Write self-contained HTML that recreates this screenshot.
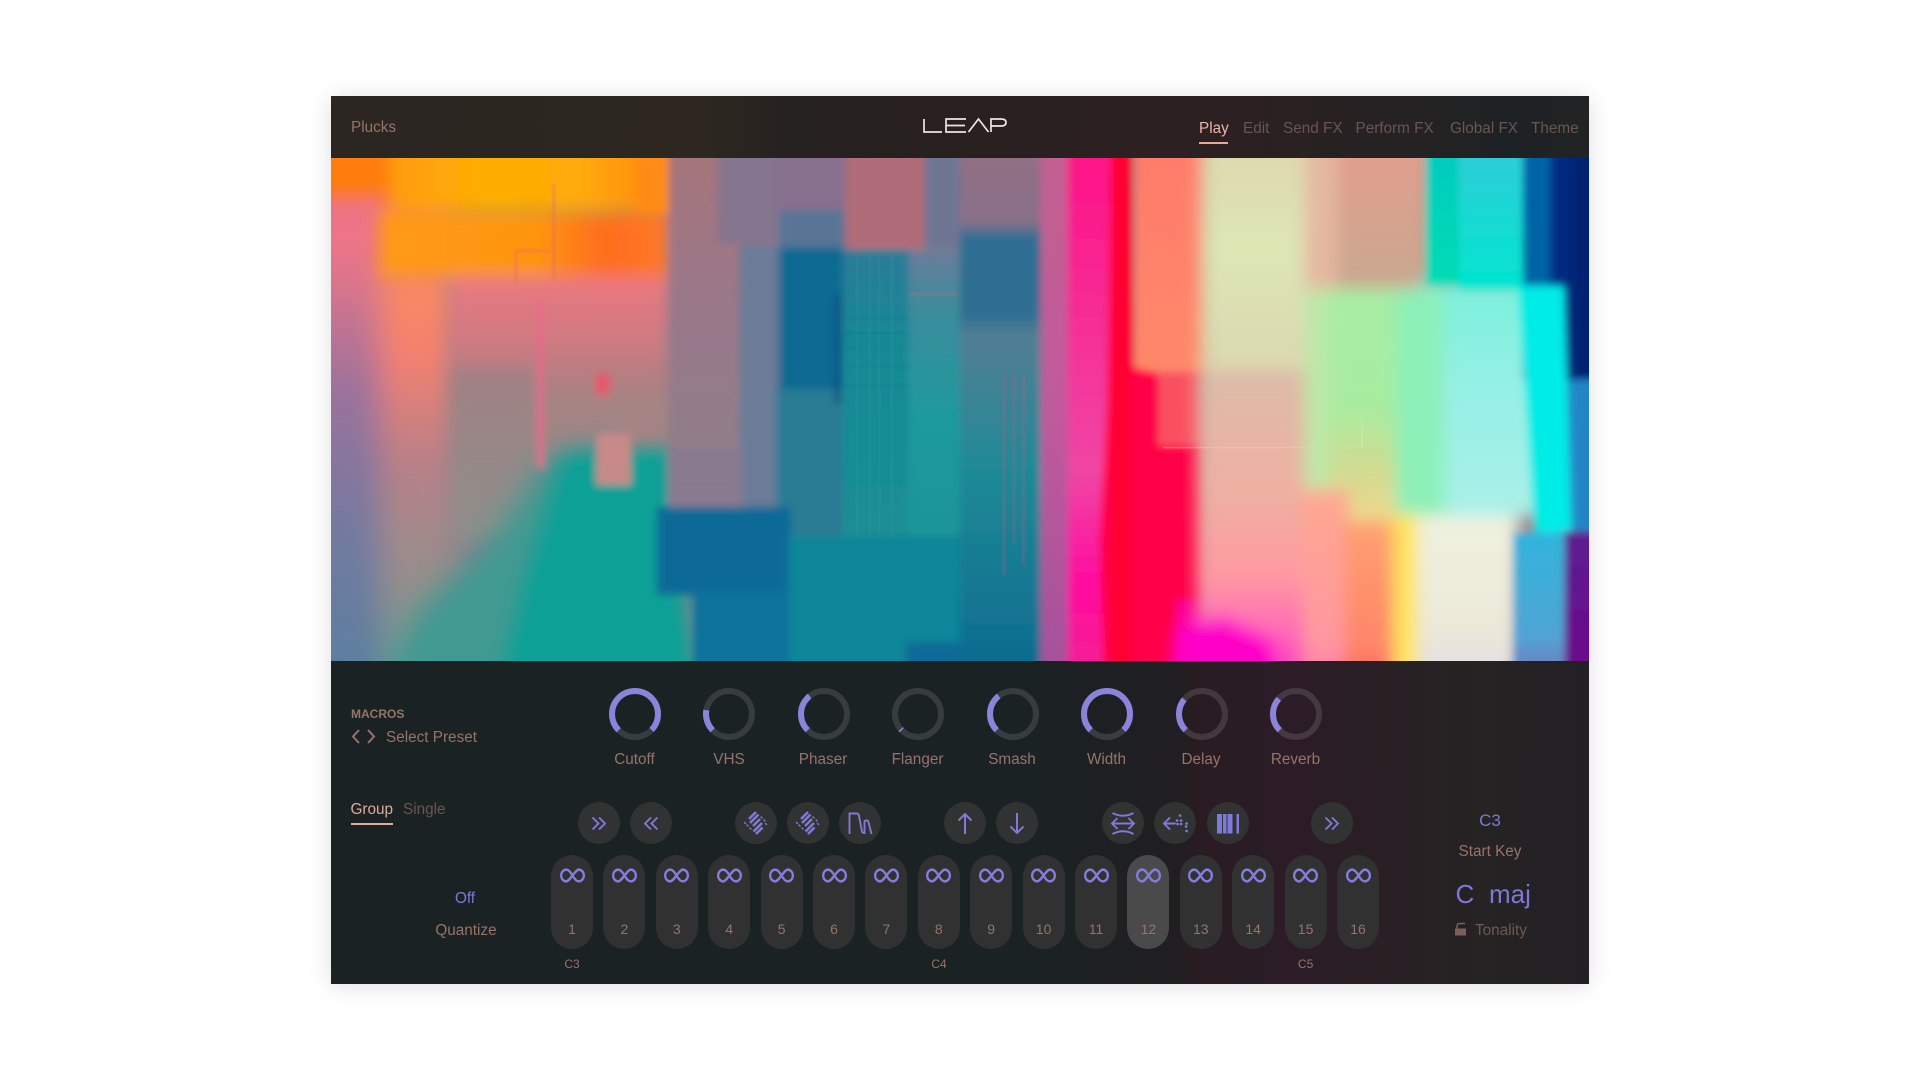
<!DOCTYPE html>
<html><head><meta charset="utf-8"><title>LEAP</title>
<style>
html,body{margin:0;padding:0;background:#fff;width:1920px;height:1080px;overflow:hidden}
body{font-family:"Liberation Sans",sans-serif;position:relative}
#p{position:absolute;left:331px;top:96px;width:1258px;height:888px;box-shadow:0 2px 22px rgba(0,0,0,.13);overflow:hidden;background:#1b2224}
#h{position:absolute;left:0;top:0;width:1258px;height:62px;background:linear-gradient(90deg,#2b2622 0,#2d2720 30%,#252120 37%,#2c2021 62%,#2d2022 70%,#232223 88%,#1d2224 94%,#222325 100%)}
#b{position:absolute;left:0;top:565px;width:1258px;height:323px;background:linear-gradient(90deg,#1b2224 0,#1b2224 56%,#1d2023 61%,#201e21 67.5%,#291c21 68.5%,#2b1c27 76%,#2a1e25 82%,#282123 86%,#252323 92%,#241f25 100%)}
#art{position:absolute;left:0;top:62px;width:1258px;height:503px;display:block}
.t{position:absolute;white-space:nowrap;line-height:20px;font-size:15.3px;margin-top:1.5px;color:#967469;transform:translateY(-50%)}
.c{transform:translate(-50%,-50%)}
.dim{color:#6a5550}
.pu{color:#7d78d6}
.r{position:absolute;width:42px;height:42px;border-radius:50%;background:#313232;top:802px;margin-left:-21px}
.r svg{position:absolute;left:0;top:0;width:42px;height:42px;fill:none;stroke:#7f79d8;stroke-width:1.9}
.k{position:absolute;width:42px;height:94px;top:855px;border-radius:21px;background:#313131;margin-left:-21px}
.k svg{position:absolute;left:8.5px;top:12.5px;width:25px;height:15px;fill:none;stroke:#837dde;stroke-width:2.4}
.k span{position:absolute;left:0;right:0;top:65px;text-align:center;font-size:14px;line-height:18px;color:#967469}
.k.on{background:#4a4a4a}
.kn{position:absolute;top:687.5px;width:52px;height:52px;margin-left:-25.5px}
.kn svg{display:block;width:52px;height:52px;fill:none;stroke-width:6}
.kn .a{stroke:rgba(255,255,255,.125)}
.kn .v{stroke:#8a84da}
</style></head><body>
<svg width="0" height="0" style="position:absolute"><defs>
<symbol id="inf" viewBox="0 0 26 14" preserveAspectRatio="none"><path d="M13 7C10.5 3 8.5 1.5 6.5 1.5C3.5 1.5 1.2 4 1.2 7C1.2 10 3.5 12.5 6.5 12.5C10 12.5 16 1.5 19.5 1.5C22.5 1.5 24.8 4 24.8 7C24.8 10 22.5 12.5 19.5 12.5C17.5 12.5 15.5 11 13 7Z"/></symbol>
<symbol id="dia" viewBox="0 0 42 42"><path style="stroke-width:2.6" d="M9.5 21.5L10.5 20.5M14 17L21 10M12 24L13 23M15 21L23.5 12.5M15 27L16 26M18 24L25 17M26 16L27 15M18.5 29.5L27 21M29 19L30 18M21 32L27.5 25.5M30.5 22.5L31.5 21.5"/></symbol>
</defs></svg>
<div id="p">
<div id="h"></div>
<svg id="art" viewBox="270 129 1028 411" preserveAspectRatio="none" xmlns="http://www.w3.org/2000/svg">
<defs>
<filter id="g" filterUnits="userSpaceOnUse" x="220" y="90" width="1130" height="490"><feGaussianBlur stdDeviation="3.2"/></filter>
<filter id="f1" x="-20%" y="-20%" width="140%" height="140%"><feGaussianBlur stdDeviation="1"/></filter>
<filter id="f3" filterUnits="userSpaceOnUse" x="220" y="90" width="1130" height="490"><feGaussianBlur stdDeviation="6"/></filter>
<filter id="f8" filterUnits="userSpaceOnUse" x="220" y="90" width="1130" height="490"><feGaussianBlur stdDeviation="12"/></filter>
<linearGradient id="lc" x1="0" y1="0" x2="0" y2="1"><stop offset="0" stop-color="#f4707c"/><stop offset=".2" stop-color="#ec7488"/><stop offset=".45" stop-color="#9a729c"/><stop offset=".7" stop-color="#727aa0"/><stop offset="1" stop-color="#5580a0"/></linearGradient>
<linearGradient id="lc2" x1="0" y1="0" x2="0" y2="1"><stop offset="0" stop-color="#fb8c5e"/><stop offset=".2" stop-color="#f48070"/><stop offset=".45" stop-color="#b88088"/><stop offset=".75" stop-color="#92908c"/><stop offset="1" stop-color="#5b9a96"/></linearGradient>
<linearGradient id="top" x1="0" y1="0" x2="1" y2="0"><stop offset="0" stop-color="#ff9c0c"/><stop offset=".35" stop-color="#ffae04"/><stop offset=".7" stop-color="#ffa908"/><stop offset="1" stop-color="#ff8414"/></linearGradient>
<linearGradient id="or" x1="0" y1="0" x2="1" y2="0"><stop offset="0" stop-color="#ff9a14"/><stop offset=".55" stop-color="#ff9410"/><stop offset=".78" stop-color="#ff6c1e"/><stop offset="1" stop-color="#ff7a28"/></linearGradient>
<linearGradient id="pk" x1="0" y1="0" x2="0" y2="1"><stop offset="0" stop-color="#ee7880"/><stop offset=".5" stop-color="#d07a82"/><stop offset="1" stop-color="#a08280"/></linearGradient>
<linearGradient id="mv" x1="0" y1="0" x2="0" y2="1"><stop offset="0" stop-color="#a87478"/><stop offset=".5" stop-color="#98788a"/><stop offset="1" stop-color="#8c8088"/></linearGradient>
<linearGradient id="gr" x1="0" y1="0" x2="0" y2="1"><stop offset="0" stop-color="#a08084"/><stop offset="1" stop-color="#90908a"/></linearGradient>
<linearGradient id="stb" x1="0" y1="0" x2="0" y2="1"><stop offset="0" stop-color="#2c7a98"/><stop offset=".35" stop-color="#158a94"/><stop offset="1" stop-color="#1b8e94"/></linearGradient>
<linearGradient id="st2" x1="0" y1="0" x2="0" y2="1"><stop offset="0" stop-color="#6a7c9a"/><stop offset=".2" stop-color="#3c8c9c"/><stop offset=".55" stop-color="#1f9a9c"/><stop offset="1" stop-color="#1a9498"/></linearGradient>
<linearGradient id="c1" x1="0" y1="0" x2="0" y2="1"><stop offset="0" stop-color="#927082"/><stop offset=".17" stop-color="#8a7088"/><stop offset=".2" stop-color="#2e6e92"/><stop offset=".33" stop-color="#2e6e92"/><stop offset=".37" stop-color="#527e94"/><stop offset=".6" stop-color="#1f8a96"/><stop offset=".93" stop-color="#0e6c90"/><stop offset="1" stop-color="#0a5a90"/></linearGradient>
<linearGradient id="c2" x1="0" y1="0" x2="0" y2="1"><stop offset="0" stop-color="#c46090"/><stop offset=".5" stop-color="#c05a9c"/><stop offset="1" stop-color="#a0509c"/></linearGradient>
<linearGradient id="mg" x1="0" y1="0" x2="0" y2="1"><stop offset="0" stop-color="#ff0c84"/><stop offset=".6" stop-color="#f046a4"/><stop offset=".8" stop-color="#ff0aa0"/><stop offset="1" stop-color="#f02a90"/></linearGradient>
<linearGradient id="cr" x1="0" y1="0" x2="0" y2="1"><stop offset="0" stop-color="#dfd6ac"/><stop offset=".5" stop-color="#dde6b4"/><stop offset="1" stop-color="#dcd8b0"/></linearGradient>
<linearGradient id="low" x1="0" y1="0" x2="0" y2="1"><stop offset="0" stop-color="#dcbca8"/><stop offset=".4" stop-color="#eeb0a2"/><stop offset=".68" stop-color="#ff9aa0"/><stop offset=".85" stop-color="#ff70b4"/><stop offset="1" stop-color="#ff40c0"/></linearGradient>
<linearGradient id="lw2" x1="0" y1="0" x2="0" y2="1"><stop offset="0" stop-color="#ffa890"/><stop offset=".7" stop-color="#ff98a0"/><stop offset="1" stop-color="#ff78b0"/></linearGradient>
<linearGradient id="rs" x1="0" y1="0" x2="0" y2="1"><stop offset="0" stop-color="#e89c8c"/><stop offset="1" stop-color="#c8a890"/></linearGradient>
<linearGradient id="gn" x1="0" y1="0" x2="0" y2="1"><stop offset="0" stop-color="#a6eea4"/><stop offset=".5" stop-color="#a8eca0"/><stop offset=".8" stop-color="#d4da90"/><stop offset="1" stop-color="#f0d88c"/></linearGradient>
<linearGradient id="cy" x1="0" y1="0" x2="0" y2="1"><stop offset="0" stop-color="#7cf0dc"/><stop offset=".5" stop-color="#98f0e6"/><stop offset="1" stop-color="#aaf0e8"/></linearGradient>
<linearGradient id="cy2" x1="0" y1="0" x2="0" y2="1"><stop offset="0" stop-color="#38c8d8"/><stop offset="1" stop-color="#00e6d0"/></linearGradient>
<linearGradient id="cy0" x1="0" y1="0" x2="0" y2="1"><stop offset="0" stop-color="#00c8c0"/><stop offset="1" stop-color="#00dcb4"/></linearGradient>
<linearGradient id="wh" x1="0" y1="0" x2="0" y2="1"><stop offset="0" stop-color="#f0f2e0"/><stop offset=".6" stop-color="#ece8d8"/><stop offset="1" stop-color="#dcd8ec"/></linearGradient>
<linearGradient id="rb" x1="0" y1="0" x2="0" y2="1"><stop offset="0" stop-color="#30b4dc"/><stop offset=".6" stop-color="#50a4d4"/><stop offset="1" stop-color="#8c5cb0"/></linearGradient>
<linearGradient id="pp" x1="0" y1="0" x2="0" y2="1"><stop offset="0" stop-color="#5c2090"/><stop offset="1" stop-color="#70008a"/></linearGradient>
<linearGradient id="nv" x1="0" y1="0" x2="1" y2="0"><stop offset="0" stop-color="#00308a"/><stop offset="1" stop-color="#000c48"/></linearGradient>
<linearGradient id="ob" x1="0" y1="0" x2="0" y2="1"><stop offset="0" stop-color="#ffa070"/><stop offset=".7" stop-color="#ff8468"/><stop offset="1" stop-color="#f04060"/></linearGradient>
<linearGradient id="sal" x1="0" y1="0" x2="0" y2="1"><stop offset="0" stop-color="#ff7a6c"/><stop offset="1" stop-color="#ff8868"/></linearGradient>
</defs>
<rect x="220" y="90" width="1130" height="490" fill="#90808c"/>
<g filter="url(#g)">
<g filter="url(#f8)">
<rect x="230" y="110" width="140" height="470" fill="url(#lc)"/>
<rect x="310" y="222" width="62" height="350" fill="url(#lc2)"/>
</g>
<g filter="url(#f3)">
<rect x="368" y="222" width="178" height="110" fill="url(#pk)"/>
<rect x="368" y="300" width="70" height="140" fill="url(#gr)"/>
<rect x="436" y="320" width="112" height="60" fill="#a68484"/>
<rect x="309" y="172" width="238" height="54" fill="url(#or)"/>
</g>
<g filter="url(#f3)">
<rect x="230" y="100" width="90" height="60" fill="#ff7c10"/>
<rect x="318" y="100" width="228" height="74" fill="url(#top)"/>
</g>
<rect x="520" y="100" width="26" height="74" fill="#ff8c12"/>
<polygon points="300,590 340,500 400,440 450,368 500,360 500,590" fill="#3f9a92" filter="url(#f8)"/>
<polygon points="400,590 430,470 460,372 546,364 572,590" fill="#0ca096" filter="url(#f3)"/>
<rect x="546" y="100" width="90" height="319" fill="url(#mv)"/>
<rect x="586" y="100" width="50" height="99" fill="#86748e"/>
<rect x="636" y="100" width="56" height="75" fill="#86708e"/>
<rect x="636" y="172" width="56" height="32" fill="#587496"/>
<rect x="690" y="100" width="66" height="103" fill="#b06c78"/>
<rect x="755" y="100" width="30" height="104" fill="#6e7694"/>
<rect x="604" y="200" width="32" height="216" fill="#6a7c98"/>
<rect x="546" y="366" width="60" height="50" fill="#8a7a90"/>
<rect x="686" y="204" width="58" height="236" fill="url(#stb)"/>
<rect x="742" y="205" width="44" height="240" fill="url(#st2)"/>
<rect x="634" y="316" width="54" height="130" fill="#2a7c94"/>
<rect x="536" y="414" width="110" height="72" fill="#106a98"/>
<rect x="566" y="484" width="80" height="90" fill="#10729c"/>
<rect x="644" y="438" width="142" height="136" fill="#0e8699"/>
<rect x="740" y="525" width="46" height="50" fill="#0c6a98"/>
<rect x="636" y="202" width="52" height="116" fill="#0a6a92"/>
<rect x="682" y="240" width="4" height="90" fill="#0c4c84"/>
<path d="M441 244V382" stroke="#e8688a" stroke-width="4.5"/>
<rect x="486" y="305" width="12" height="18" fill="#e4586c"/>
<rect x="487" y="354" width="28" height="42" fill="#c88a88"/>
<rect x="784" y="100" width="70" height="474" fill="url(#c1)"/>
<rect x="850" y="100" width="28" height="474" fill="url(#c2)"/>
<rect x="872" y="100" width="36" height="474" fill="url(#mg)"/>
<rect x="927" y="100" width="60" height="206" fill="url(#sal)"/>
<polygon points="908,100 924,100 926,300 945,304 950,340 982,345 982,575 902,575 898,440 904,330" fill="#ff0048"/>
<rect x="946" y="304" width="36" height="60" fill="#fa5060"/>
<rect x="960" y="490" width="22" height="85" fill="#ff0090"/>
<rect x="908" y="100" width="16" height="474" fill="#ff0030"/>
<g filter="url(#f3)">
<rect x="981" y="100" width="102" height="205" fill="url(#cr)"/>
<rect x="978" y="302" width="106" height="245" fill="url(#low)"/>
<rect x="1066" y="100" width="30" height="136" fill="#e4b8a0"/>
<rect x="1092" y="100" width="76" height="136" fill="url(#rs)"/>
<rect x="1066" y="236" width="60" height="185" fill="#bce8a8"/>
<rect x="1086" y="236" width="82" height="190" fill="url(#gn)"/>
<rect x="1064" y="400" width="38" height="170" fill="url(#lw2)"/>
<rect x="1098" y="426" width="46" height="150" fill="url(#ob)"/>
<rect x="1160" y="230" width="100" height="192" fill="url(#cy)"/>
<rect x="1140" y="236" width="40" height="185" fill="#8cf0b8"/>
<polygon points="950,590 962,510 1000,503 1040,522 1052,590" fill="#ff00c8"/>
<rect x="1155" y="421" width="85" height="154" fill="url(#wh)"/>
<rect x="1138" y="420" width="20" height="154" fill="#ffe45c"/>
</g>
<rect x="1164" y="100" width="30" height="133" fill="url(#cy0)"/>
<rect x="1192" y="100" width="56" height="137" fill="url(#cy2)"/>
<rect x="1244" y="100" width="24" height="210" fill="#0064a6"/>
<rect x="1266" y="100" width="70" height="213" fill="url(#nv)"/>
<rect x="1275" y="310" width="60" height="126" fill="#2286c6"/>
<polygon points="1240,233 1278,233 1284,438 1254,438" fill="#00ece6" filter="url(#f1)"/>
<rect x="1276" y="434" width="60" height="140" fill="url(#pp)"/>
<rect x="1236" y="435" width="42" height="140" fill="url(#rb)"/>
</g>
<g filter="url(#f1)">
<g stroke="#2aa8a4" stroke-width="1.4" opacity=".3"><path d="M700 205V440M710 205V440M718 205V440M728 205V440"/></g>
<g stroke="#0c6f8c" stroke-width="1" opacity=".3"><path d="M690 260H742M690 272H742M690 285H742M690 300H742M690 315H742"/></g>
<g stroke="#9a7a8e" stroke-width="2" opacity=".5"><path d="M548 398H598M548 408H598M742 240H782"/></g>
<path d="M421 205H449M421 205V232M452 150V230" stroke="#e87060" stroke-width="2" fill="none" opacity=".55"/>
<g stroke="#b85a88" stroke-width="1.6" opacity=".5" fill="none"><path d="M820 305V470M828 305V445M836 305V462"/></g>
</g>
<rect x="950" y="365" width="163" height="1.2" fill="#f0d0c0" opacity=".4"/>
<rect x="1112" y="342" width="1" height="24" fill="#f0e8c8" opacity=".35"/>
</svg>
<div id="b"></div>
</div>

<div class="t" style="left:351px;top:126px">Plucks</div>
<svg style="position:absolute;left:922px;top:117px" width="88" height="18" fill="none" stroke="#ece6e2" stroke-width="1.7">
<path d="M2 2V15H20M44 2H24V15H44M24 8.5H43M46.5 15L56.5 2L66.5 15M69 15V2H79Q84 2 84 5.5Q84 9 79 9H69"/>
</svg>
<div class="t" style="left:1199px;top:127px;color:#e6b6a6">Play</div>
<div style="position:absolute;left:1199px;top:142px;width:29px;height:1.6px;background:#e6a898"></div>
<div class="t dim" style="left:1243px;top:127px">Edit</div>
<div class="t dim" style="left:1283px;top:127px">Send FX</div>
<div class="t dim" style="left:1355.5px;top:127px">Perform FX</div>
<div class="t dim" style="left:1450px;top:127px">Global FX</div>
<div class="t dim" style="left:1531px;top:127px">Theme</div>

<div class="t" style="left:351px;top:712px;font-size:12px;font-weight:bold">MACROS</div>
<svg style="position:absolute;left:351px;top:728px" width="25" height="17" fill="none" stroke="#967469" stroke-width="2"><path d="M8 2L2 8.5L8 15M17 2L23 8.5L17 15"/></svg>
<div class="t" style="left:386px;top:736px">Select Preset</div>

<div class="kn" style="left:634px"><svg><circle class="a" cx="26" cy="26" r="23"/><circle class="v" cx="26" cy="26" r="23" pathLength="360" stroke-dasharray="270 360" transform="rotate(135 26 26)"/></svg></div>
<div class="kn" style="left:728.6px"><svg><circle class="a" cx="26" cy="26" r="23"/><circle class="v" cx="26" cy="26" r="23" pathLength="360" stroke-dasharray="55 360" transform="rotate(135 26 26)"/></svg></div>
<div class="kn" style="left:823px"><svg><circle class="a" cx="26" cy="26" r="23"/><circle class="v" cx="26" cy="26" r="23" pathLength="360" stroke-dasharray="97 360" transform="rotate(135 26 26)"/></svg></div>
<div class="kn" style="left:917.5px"><svg><circle class="a" cx="26" cy="26" r="23"/><circle class="v" cx="26" cy="26" r="23" pathLength="360" stroke-dasharray="4 360" transform="rotate(135 26 26)"/></svg></div>
<div class="kn" style="left:1012px"><svg><circle class="a" cx="26" cy="26" r="23"/><circle class="v" cx="26" cy="26" r="23" pathLength="360" stroke-dasharray="97 360" transform="rotate(135 26 26)"/></svg></div>
<div class="kn" style="left:1106px"><svg><circle class="a" cx="26" cy="26" r="23"/><circle class="v" cx="26" cy="26" r="23" pathLength="360" stroke-dasharray="270 360" transform="rotate(135 26 26)"/></svg></div>
<div class="kn" style="left:1201px"><svg><circle class="a" cx="26" cy="26" r="23"/><circle class="v" cx="26" cy="26" r="23" pathLength="360" stroke-dasharray="85 360" transform="rotate(135 26 26)"/></svg></div>
<div class="kn" style="left:1295.5px"><svg><circle class="a" cx="26" cy="26" r="23"/><circle class="v" cx="26" cy="26" r="23" pathLength="360" stroke-dasharray="87 360" transform="rotate(135 26 26)"/></svg></div>

<div class="t c" style="left:634.5px;top:758px">Cutoff</div>
<div class="t c" style="left:729px;top:758px">VHS</div>
<div class="t c" style="left:823px;top:758px">Phaser</div>
<div class="t c" style="left:917.5px;top:758px">Flanger</div>
<div class="t c" style="left:1012px;top:758px">Smash</div>
<div class="t c" style="left:1106.5px;top:758px">Width</div>
<div class="t c" style="left:1201px;top:758px">Delay</div>
<div class="t c" style="left:1295.5px;top:758px">Reverb</div>

<div class="t" style="left:350.5px;top:808px;color:#dfa998">Group</div>
<div style="position:absolute;left:350.5px;top:823px;width:42.5px;height:1.7px;background:#e6a898"></div>
<div class="t dim" style="left:403px;top:808px">Single</div>
<div class="t c pu" style="left:465px;top:897px">Off</div>
<div class="t c" style="left:466px;top:929px">Quantize</div>

<div class="r" style="left:598.5px"><svg><path d="M14.5 15.5L20.5 21.5L14.5 27.5M21 15.5L27 21.5L21 27.5"/></svg></div>
<div class="r" style="left:650.5px"><svg><path d="M21 15.5L15 21.5L21 27.5M27.5 15.5L21.5 21.5L27.5 27.5"/></svg></div>
<div class="r" style="left:755.5px"><svg><use href="#dia"/></svg></div>
<div class="r" style="left:807.5px"><svg><use href="#dia"/></svg></div>
<div class="r" style="left:860px"><svg><path d="M10.5 32V11.5H18Q19.5 11.5 20 14L23 29.5Q23.5 31 25 31H25.5V20Q25.5 18.5 27 18.5H28Q29 18.5 29.4 20L32.5 32"/></svg></div>
<div class="r" style="left:964.5px"><svg style="stroke-width:2"><path d="M21 32V12M14.5 18.5L21 12L27.5 18.5"/></svg></div>
<div class="r" style="left:1017px"><svg style="stroke-width:2"><path d="M21 11V31M14.5 24.5L21 31L27.5 24.5"/></svg></div>
<div class="r" style="left:1122.5px"><svg><path d="M10 21.5H32M15.5 16L10 21.5L15.5 27M26.5 16L32 21.5L26.5 27M10.5 11Q21 16.5 31.5 11M10.5 32Q21 26.5 31.5 32"/></svg></div>
<div class="r" style="left:1175px"><svg style="stroke-linecap:round"><path d="M10 21.5H21M15.5 16L10 21.5L15.5 27"/><path style="stroke-width:2.6" d="M26 13.5H26.2M23 18.5H23.2M27 18.5H27.2M23.5 22H23.7M27 22H27.2M32.5 21.5H32.7M32.5 29H32.7M32 24.5H32.2"/></svg></div>
<div class="r" style="left:1227.5px"><svg style="stroke:none;fill:#807ada"><path d="M10 12H15V31.5H10ZM16 12H19.5V31.5H16ZM20.5 12H25.5V31.5H20.5ZM29.5 12H32V31.5H29.5Z"/></svg></div>
<div class="r" style="left:1331.5px"><svg><path d="M14.5 15.5L20.5 21.5L14.5 27.5M21 15.5L27 21.5L21 27.5"/></svg></div>

<div class="k" style="left:572px"><svg><use href="#inf"/></svg><span>1</span></div>
<div class="k" style="left:624.4px"><svg><use href="#inf"/></svg><span>2</span></div>
<div class="k" style="left:676.8px"><svg><use href="#inf"/></svg><span>3</span></div>
<div class="k" style="left:729.2px"><svg><use href="#inf"/></svg><span>4</span></div>
<div class="k" style="left:781.6px"><svg><use href="#inf"/></svg><span>5</span></div>
<div class="k" style="left:834px"><svg><use href="#inf"/></svg><span>6</span></div>
<div class="k" style="left:886.4px"><svg><use href="#inf"/></svg><span>7</span></div>
<div class="k" style="left:938.8px"><svg><use href="#inf"/></svg><span>8</span></div>
<div class="k" style="left:991.2px"><svg><use href="#inf"/></svg><span>9</span></div>
<div class="k" style="left:1043.6px"><svg><use href="#inf"/></svg><span>10</span></div>
<div class="k" style="left:1096px"><svg><use href="#inf"/></svg><span>11</span></div>
<div class="k on" style="left:1148.4px"><svg><use href="#inf"/></svg><span>12</span></div>
<div class="k" style="left:1200.8px"><svg><use href="#inf"/></svg><span>13</span></div>
<div class="k" style="left:1253.2px"><svg><use href="#inf"/></svg><span>14</span></div>
<div class="k" style="left:1305.6px"><svg><use href="#inf"/></svg><span>15</span></div>
<div class="k" style="left:1358px"><svg><use href="#inf"/></svg><span>16</span></div>

<div class="t c" style="left:572px;top:962px;font-size:12px">C3</div>
<div class="t c" style="left:939px;top:962px;font-size:12px">C4</div>
<div class="t c" style="left:1305.6px;top:962px;font-size:12px">C5</div>

<div class="t c pu" style="left:1490px;top:819px;font-size:17px">C3</div>
<div class="t c" style="left:1490px;top:850.5px">Start Key</div>
<div class="t pu" style="left:1455.5px;top:892px;font-size:26px;line-height:30px">C</div>
<div class="t pu" style="left:1489px;top:892px;font-size:26px;line-height:30px">maj</div>
<svg style="position:absolute;left:1454px;top:922px" width="13" height="14" fill="none"><path d="M3 7V4Q3 1.5 6 1.5H11" stroke="#7a5f5a" stroke-width="1.5"/><rect x="1" y="6.5" width="11" height="7" fill="#7a5f5a"/></svg>
<div class="t dim" style="left:1475px;top:929px;color:#6e5854">Tonality</div>
</body></html>
